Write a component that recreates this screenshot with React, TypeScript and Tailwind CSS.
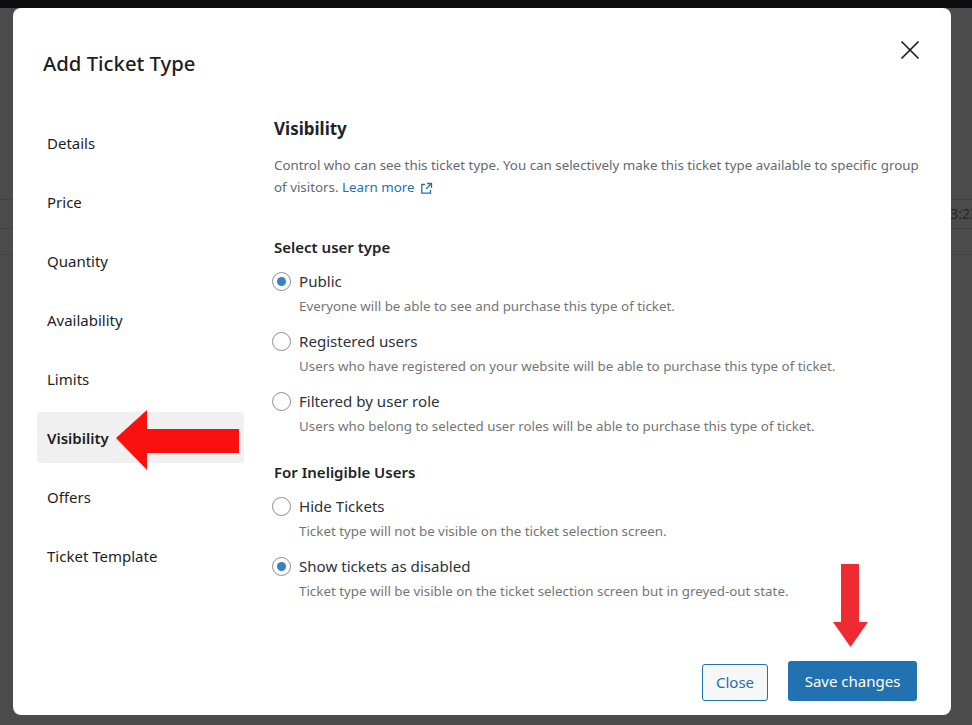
import React from "react";

const font = { fontFamily: "'Noto Sans', 'Liberation Sans', sans-serif" };

function Radio({ checked }: { checked?: boolean }) {
  return (
    <span className="flex h-[19px] w-[19px] shrink-0 items-center justify-center rounded-full border border-[#8c8f94] bg-white">
      {checked && <span className="h-[9px] w-[9px] rounded-full bg-[#3582c4]" />}
    </span>
  );
}

function Option({ label, desc, checked }: { label: string; desc: string; checked?: boolean }) {
  return (
    <div className="flex flex-col">
      <div className="flex h-[22px] items-center gap-[8px] -ml-[2px]">
        <Radio checked={checked} />
        <span className="text-[15.1px] leading-[22px] text-[#2c3338]">{label}</span>
      </div>
      <div className="mt-[4px] pl-[25px] text-[13.35px] leading-[20px] text-[#757575] whitespace-nowrap">{desc}</div>
    </div>
  );
}

const items = ["Details", "Price", "Quantity", "Availability", "Limits", "Visibility", "Offers", "Ticket Template"];

export default function App() {
  return (
    <div className="relative h-[725px] w-[972px] overflow-hidden bg-[#4b4b4b]" style={font}>
      {/* background page */}
      <div className="h-[8px] bg-[#0c0d10]" />
      <div className="mt-[191px] h-px bg-[#414141]" />
      <div className="flex h-[28px] justify-end">
        <span className="mr-[-6px] text-[14px] leading-[28px] text-[#252525]">3:23</span>
      </div>
      <div className="h-px bg-[#414141]" />
      <div className="mt-[25px] h-px bg-[#414141]" />

      {/* modal */}
      <div className="absolute left-[13px] top-[8px] flex h-[707px] w-[938px] flex-col rounded-[8px] bg-white">
        <div className="flex items-start justify-between pl-[30px] pr-[31px] pt-[41px]">
          <h1 className="text-[20.3px] font-medium leading-[28px] text-[#1e1e1e]">Add Ticket Type</h1>
          <svg width="20" height="20" viewBox="0 0 20 20" className="mt-[-9px]">
            <path d="M1.5 1.5 L18.5 18.5 M18.5 1.5 L1.5 18.5" stroke="#1e1e1e" strokeWidth="1.7" fill="none" />
          </svg>
        </div>

        <div className="mt-[40px] flex flex-1">
          <div className="ml-[24px] flex w-[207px] shrink-0 flex-col gap-[8px]">
            {items.map((it) => (
              <div
                key={it}
                className={
                  "flex h-[51px] items-center rounded-[4px] px-[10px] pt-[2px] text-[15px] " +
                  (it === "Visibility" ? "bg-[#f0f0f0] font-semibold text-[#1e1e1e]" : "text-[#1e1e1e]")
                }
              >
                {it}
              </div>
            ))}
          </div>

          <div className="ml-[30px] flex flex-col">
            <h2 className="text-[17px] font-bold leading-[24px] text-[#1d2327]">Visibility</h2>
            <p className="mt-[13px] whitespace-nowrap text-[13.35px] leading-[22px] text-[#646970]">
              Control who can see this ticket type. You can selectively make this ticket type available to specific group
              <br />
              of visitors.{" "}
              <span className="inline-flex items-center gap-[5px] text-[#2271b1]">
                Learn more
                <svg width="13" height="13" viewBox="0 0 13 13" className="mt-[2px]">
                  <path d="M7 1.5 H11.5 V6 M11.5 1.5 L6 7 M5 2.5 H1.8 V11.2 H10.5 V8" stroke="#2271b1" strokeWidth="1.3" fill="none" />
                </svg>
              </span>
            </p>

            <h3 className="mt-[38px] text-[15px] font-semibold leading-[22px] text-[#1d2327]">Select user type</h3>
            <div className="mt-[12px] flex flex-col gap-[14px]">
              <Option checked label="Public" desc="Everyone will be able to see and purchase this type of ticket." />
              <Option label="Registered users" desc="Users who have registered on your website will be able to purchase this type of ticket." />
              <Option label="Filtered by user role" desc="Users who belong to selected user roles will be able to purchase this type of ticket." />
            </div>

            <h3 className="mt-[25px] text-[15px] font-semibold leading-[22px] text-[#1d2327]">For Ineligible Users</h3>
            <div className="mt-[12px] flex flex-col gap-[14px]">
              <Option label="Hide Tickets" desc="Ticket type will not be visible on the ticket selection screen." />
              <Option checked label="Show tickets as disabled" desc="Ticket type will be visible on the ticket selection screen but in greyed-out state." />
            </div>
          </div>
        </div>

        <div className="flex items-end justify-end gap-[20px] pb-[14px] pr-[34px]">
          <button className="h-[37px] w-[66px] rounded-[3px] border border-[#2271b1] bg-[#f6f7f7] text-[15px] text-[#2271b1]">
            Close
          </button>
          <button className="h-[40px] w-[129px] rounded-[3px] bg-[#2271b1] text-[15px] text-white">Save changes</button>
        </div>
      </div>

      {/* annotation arrows */}
      <svg className="pointer-events-none absolute left-0 top-0" width="972" height="725" viewBox="0 0 972 725">
        <polygon points="116,438 147,410 147,429 239,429 239,453 147,453 147,470" fill="#fb1010" />
        <polygon points="841,564 859,564 859,622 868,622 850.5,647 833,622 841,622" fill="#ed2b30" />
      </svg>
    </div>
  );
}
